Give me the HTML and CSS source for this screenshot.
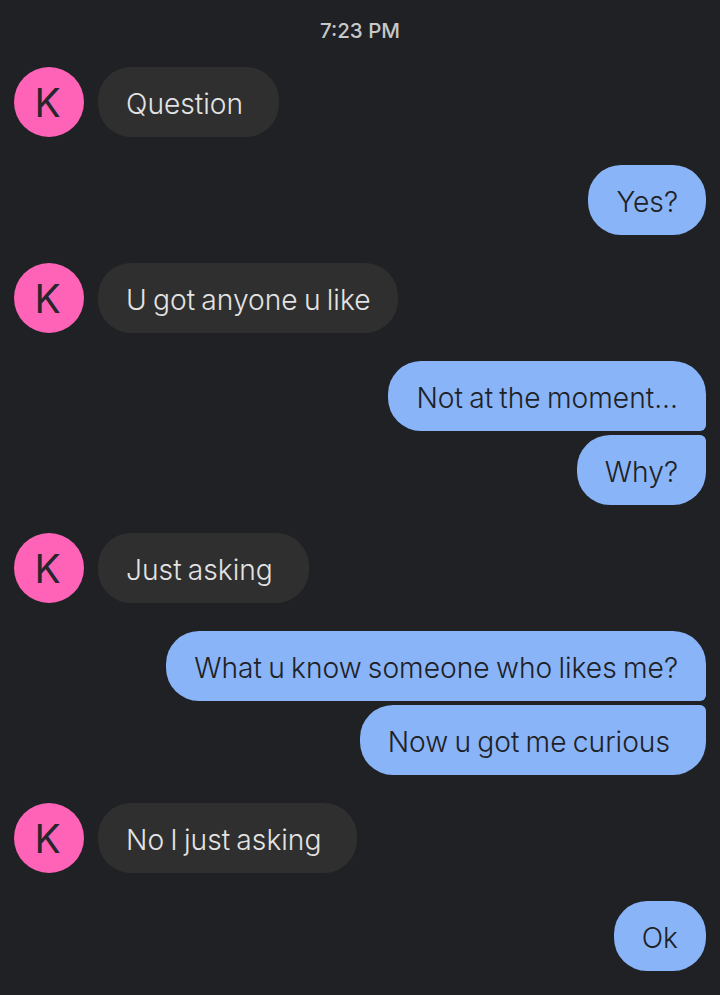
FILE: index.html
```html
<!DOCTYPE html>
<html lang="en">
<head>
<meta charset="utf-8">
<title>Messages</title>
<link rel="stylesheet" href="styles.css">
</head>
<body>
<main class="thread">
  <div class="time">7:23 PM</div>
  <div class="group in">
    <div class="avatar">K</div>
    <div class="bubble wide">Question</div>
  </div>
  <div class="group out">
    <div class="bubble">Yes?</div>
  </div>
  <div class="group in">
    <div class="avatar">K</div>
    <div class="bubble">U got anyone u like</div>
  </div>
  <div class="group out">
    <div class="bubble first">Not at the moment...</div>
    <div class="bubble last">Why?</div>
  </div>
  <div class="group in">
    <div class="avatar">K</div>
    <div class="bubble wide">Just asking</div>
  </div>
  <div class="group out">
    <div class="bubble first">What u know someone who likes me?</div>
    <div class="bubble last wide">Now u got me curious</div>
  </div>
  <div class="group in">
    <div class="avatar">K</div>
    <div class="bubble wide">No I just asking</div>
  </div>
  <div class="group out">
    <div class="bubble">Ok</div>
  </div>
</main>
</body>
</html>
```
FILE: styles.css
```css
* { box-sizing: border-box; }
html, body { margin: 0; height: 100%; }
body {
  background: #202124;
  font-family: Inter, Roboto, sans-serif;
  overflow: hidden;
}
.thread {
  display: flex;
  flex-direction: column;
  gap: 28px;
  padding: 20px 14px 0;
}
.time {
  height: 19px;
  text-align: center;
  font-size: 20.5px;
  font-weight: 500;
  line-height: 22px;
  color: #c6c7c9;
}
.group { display: flex; gap: 4px; }
.group.in { flex-direction: row; align-items: center; gap: 14px; }
.group.out { flex-direction: column; align-items: flex-end; }
.avatar {
  width: 70px;
  height: 70px;
  padding-right: 3px;
  border-radius: 50%;
  background: #ff63b8;
  color: #26262c;
  font-size: 39px;
  font-weight: 400;
  line-height: 72px;
  text-align: center;
}
.bubble {
  height: 70px;
  padding: 0 28px;
  border-radius: 33px;
  font-size: 28.2px;
  font-weight: 300;
  word-spacing: -1.7px;
  line-height: 74px;
  white-space: nowrap;
}
.bubble.wide { padding-right: 36px; }
.in .bubble { background: #2f2f2f; color: #e3e3e3; }
.out .bubble { background: #89b4f8; color: #202124; }
.out .bubble.first { border-bottom-right-radius: 6px; }
.out .bubble.last { border-top-right-radius: 6px; }
```
